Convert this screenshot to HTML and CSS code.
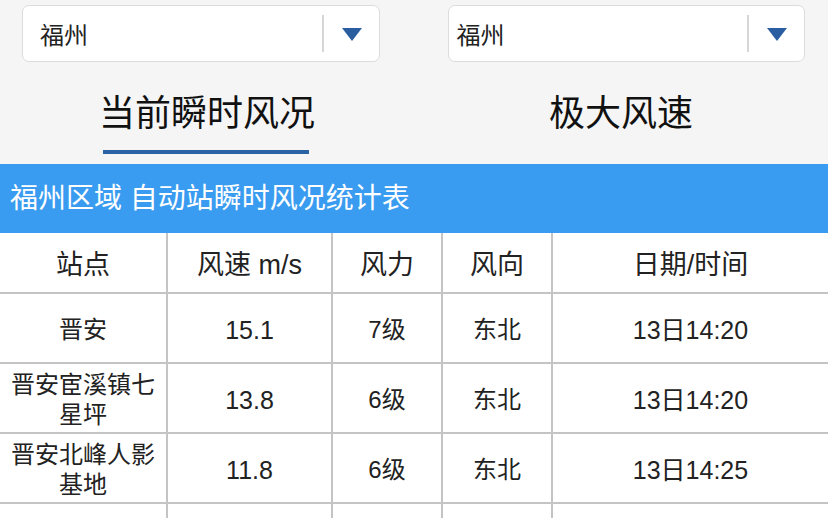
FILE: index.html
```html
<!DOCTYPE html>
<html lang="zh-CN">

<head>
    <meta charset="UTF-8">
    <meta name="viewport" content="width=device-width, initial-scale=1.0">
    <title>瞬时风况</title>
    <link rel="stylesheet" href="styles.css">
</head>

<body>
    <div class="selects">
        <div class="select select-left">
            <span class="select-text">福州</span>
            <span class="select-arrow"></span>
        </div>
        <div class="select select-right">
            <span class="select-text">福州</span>
            <span class="select-arrow"></span>
        </div>
    </div>

    <div class="tabs">
        <div class="tab active">当前瞬时风况</div>
        <div class="tab">极大风速</div>
    </div>

    <div class="table-title">福州区域 自动站瞬时风况统计表</div>

    <table class="wind-table">
        <colgroup>
            <col style="width: 167px">
            <col style="width: 165px">
            <col style="width: 110px">
            <col style="width: 110px">
            <col style="width: 276px">
        </colgroup>
        <thead>
            <tr>
                <th>站点</th>
                <th>风速 m/s</th>
                <th>风力</th>
                <th>风向</th>
                <th>日期/时间</th>
            </tr>
        </thead>
        <tbody>
            <tr>
                <td>晋安</td>
                <td class="num">15.1</td>
                <td>7级</td>
                <td>东北</td>
                <td class="num">13日14:20</td>
            </tr>
            <tr>
                <td>晋安宦溪镇七星坪</td>
                <td class="num">13.8</td>
                <td>6级</td>
                <td>东北</td>
                <td class="num">13日14:20</td>
            </tr>
            <tr>
                <td>晋安北峰人影基地</td>
                <td class="num">11.8</td>
                <td>6级</td>
                <td>东北</td>
                <td class="num">13日14:25</td>
            </tr>
            <!-- 下一行只露出表格线 -->
            <tr>
                <td></td>
                <td></td>
                <td></td>
                <td></td>
                <td></td>
            </tr>
        </tbody>
    </table>
</body>

</html>
```

FILE: styles.css
```css
* {
    box-sizing: border-box;
}

body {
    margin: 0;
    background-color: #f5f5f5;
    font-family: "Liberation Sans", "Noto Sans CJK SC", sans-serif;
    color: #1a1a1a;
}

/* 顶部两个下拉框 */
.selects {
    display: grid;
    grid-template-columns: 1fr 1fr;
    column-gap: 68px;
    padding: 5px 23px 0 22px;
}

.select {
    display: flex;
    align-items: center;
    height: 57px;
    border: 1px solid #dcdcdc;
    border-radius: 7px;
    background-color: #fff;
}

.select-left {
    padding-left: 17px;
}

.select-right {
    padding-left: 8px;
}

.select-text {
    flex: 1;
    font-size: 24px;
    color: #222;
}

.select-arrow {
    position: relative;
    width: 57px;
    height: 37px;
    border-left: 2px solid #d6d6d6;
}

/* 向下的三角形 */
.select-arrow::after {
    content: "";
    position: absolute;
    left: 18px;
    top: 13px;
    border-style: solid;
    border-width: 13px 10px 0 10px;
    border-color: #2b5ea0 transparent transparent;
}

/* 标签页 */
.tabs {
    display: flex;
    margin-top: 32px;
    height: 70px;
}

.tab {
    flex: 1;
    position: relative;
    text-align: center;
    font-size: 36px;
    line-height: 40px;
    color: #111;
}

.tab.active::after {
    content: "";
    position: absolute;
    left: 50%;
    top: 56px;
    width: 206px;
    height: 4px;
    margin-left: -104px;
    background-color: #2a62a4;
}

.table-title {
    height: 69px;
    line-height: 69px;
    padding-left: 10px;
    background-color: #3a9cf0;
    color: #fff;
    font-size: 28px;
}

.wind-table {
    width: 100%;
    table-layout: fixed;
    border-collapse: collapse;
    background-color: #fff;
}

.wind-table th,
.wind-table td {
    border: 2px solid #c4c4c4;
    text-align: center;
    vertical-align: middle;
    color: #222;
    padding: 0 6px;
}

.wind-table tr > :first-child {
    border-left: 0;
}

.wind-table tr > :last-child {
    border-right: 0;
}

.wind-table thead th {
    border-top: 0;
    height: 60px;
    font-size: 27px;
    font-weight: normal;
}

.wind-table tbody td {
    height: 70px;
    padding-top: 4px;
    font-size: 24px;
    line-height: 30px;
}

.wind-table tbody td.num {
    font-size: 25px;
}
```
